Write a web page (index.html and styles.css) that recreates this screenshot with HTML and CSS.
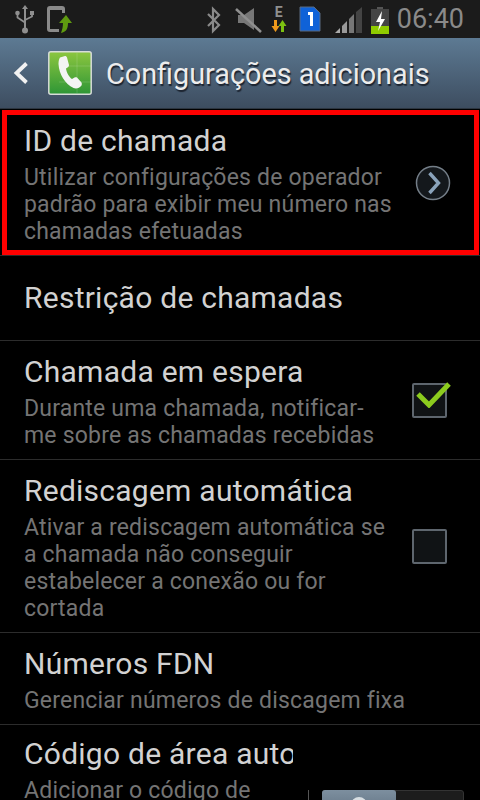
FILE: index.html
```html
<!DOCTYPE html>
<html lang="pt">
<head>
<meta charset="utf-8">
<title>Configurações adicionais</title>
<link rel="stylesheet" href="styles.css">
</head>
<body>
<div class="screen">
  <header class="status">
    <div class="status-left">
      <svg class="ic-usb" width="20" height="30" viewBox="0 0 20 30"><g fill="#8f8f8f"><path d="M9 3h2v21H9z"/><path d="M10 0l3 4H7z"/><circle cx="10" cy="25.5" r="3"/><rect x="15" y="6" width="4" height="4"/><circle cx="2.5" cy="8" r="2.3"/></g><path d="M2.5 9v3.5L10 17.500M17 9v2.500L10 15" fill="none" stroke="#8f8f8f" stroke-width="1.800"/></svg>
      <svg class="ic-phone" width="28" height="30" viewBox="0 0 28 30"><path d="M4 1h12a3 3 0 0 1 3 3v4h-3V5H4v19h9v3H4a3 3 0 0 1-3-3V4a3 3 0 0 1 3-3z" fill="#8a8a8a"/><path d="M15 28c5-1 7-4 7-10h4l-6-8-7 8h4c0 4-1 7-2 10z" fill="#5f9a10"/></svg>
    </div>
    <div class="status-right">
      <svg class="ic-bt" width="15" height="28" viewBox="0 0 15 28"><path d="M2 8l11 11-6 6V3l6 6L2 20" fill="none" stroke="#8a8a8a" stroke-width="2.200"/></svg>
      <svg class="ic-mute" width="28" height="28" viewBox="0 0 28 28"><path d="M3 10h6l10-7v22l-10-7H3z" fill="#777"/><path d="M1 4l25 23" stroke="#8f8f8f" stroke-width="2.500"/></svg>
      <div class="net">
        <span class="net-e">E</span>
        <svg width="16" height="13" viewBox="0 0 16 13"><path d="M3 0h3v6h2.500L4.500 12 .5 6H3z" fill="#ef9a1c"/><path d="M10 12V6H7.500l4-6 4 6H13v6z" fill="#7cc011"/></svg>
      </div>
      <svg class="ic-sim" width="22" height="26" viewBox="0 0 22 26"><path d="M1 1h14l6 6v18H1z" fill="#0f62d8" stroke="#5a6a80"/><path d="M9 6h5v14h-3V9H9z" fill="#fff"/></svg>
      <svg class="ic-signal" width="29" height="28" viewBox="0 0 29 28"><path d="M0 27l5-5v5z" fill="#aaa"/><path d="M7 20l5-5v12H7z" fill="#999"/><path d="M14 13l5-5v19h-5z" fill="#777"/><path d="M21 6l6-5v26h-6z" fill="#444"/></svg>
      <svg class="ic-batt" width="18" height="28" viewBox="0 0 18 28"><path d="M6 0h6v2H6z" fill="#555"/><path d="M0 2h18v17H0z" fill="#444"/><path d="M0 19h18v8H0z" fill="#8fcb00"/><path d="M11 4L5 15h4l-2 9 7-12H10z" fill="#fff"/></svg>
      <span class="clock">06:40</span>
    </div>
  </header>
  <div class="actionbar">
    <svg class="back" width="16" height="24" viewBox="0 0 16 24"><path d="M13.500 2.500L3.500 12l10 9.500" fill="none" stroke="#f2f2f2" stroke-width="3.800"/></svg>
    <svg class="appicon" width="44" height="44" viewBox="0 0 44 44">
      <defs><linearGradient id="g" x1="0" y1="0" x2="0" y2="1"><stop offset="0" stop-color="#8cc63f"/><stop offset="1" stop-color="#2e9636"/></linearGradient></defs>
      <rect x=".8" y=".8" width="42.400" height="42.400" rx="2" fill="url(#g)" stroke="#d8dcd8" stroke-width="1.500"/>
      <path d="M11 15h32M11 31h32M29 2v40" stroke="#fff" stroke-opacity=".14"/>
      <path d="M12 6.500l5-1.500c1 0 1.500.5 2 1.500l2 7.500c0 1-.5 2-1.500 2.500l-1.500 1c.5 4 3 8.500 6 10.500l2.500-1.500c1-.5 2-.5 2.500 0l4.500 5c.5 1 .5 2 0 3-2 2.500-5 3.500-8 2.500C17 33 11 23 10.500 13c0-3 .5-5 1.500-6.500z" fill="#f4f4f4"/>
    </svg>
    <h1 class="bar-title">Configurações adicionais</h1>
  </div>
  <main class="list">
    <section class="row row-boxed">
      <div class="text">
        <h2>ID de chamada</h2>
        <p>Utilizar configurações de operador padrão para exibir meu número nas chamadas efetuadas</p>
      </div>
      <svg class="chev" width="36" height="36" viewBox="0 0 36 36"><circle cx="18" cy="18" r="16.500" fill="#14181c" stroke="#747e88" stroke-width="1.500"/><path d="M14.500 8l9 10-9 10" fill="none" stroke="#8aa3bb" stroke-width="3.400"/></svg>
    </section>
    <section class="row row-single"><div class="text"><h2>Restrição de chamadas</h2></div></section>
    <section class="row row-wait">
      <div class="text">
        <h2>Chamada em espera</h2>
        <p>Durante uma chamada, notificar-<br>me sobre as chamadas recebidas</p>
      </div>
      <div class="check">
        <svg class="tick" width="36" height="30" viewBox="0 0 36 30"><path d="M3 16l11 11L34 6" fill="none" stroke="#8ccb1e" stroke-width="5"/></svg>
      </div>
    </section>
    <section class="row row-redial">
      <div class="text">
        <h2>Rediscagem automática</h2>
        <p>Ativar a rediscagem automática se a chamada não conseguir estabelecer a conexão ou for cortada</p>
      </div>
      <div class="check"></div>
    </section>
    <section class="row row-fdn">
      <div class="text">
        <h2>Números FDN</h2>
        <p class="nowrap">Gerenciar números de discagem fixa</p>
      </div>
    </section>
    <section class="row row-last">
      <div class="text">
        <h2 class="clip">Código de área auto</h2>
        <p class="nowrap">Adicionar o código de</p>
      </div>
      <div class="toggle-wrap">
        <div class="toggle"><div class="toggle-on"><span class="knob"></span></div></div>
      </div>
    </section>
  </main>
</div>
</body>
</html>
```
FILE: styles.css
```css
* { box-sizing: border-box; margin: 0; padding: 0; }
html, body { width: 480px; height: 800px; overflow: hidden; background: #000; }
body { font-family: Roboto, "Liberation Sans", sans-serif; }
.screen { width: 480px; height: 800px; overflow: hidden; display: flex; flex-direction: column; }

.status { height: 38px; flex: none; background: #1b1b1b; display: flex; justify-content: space-between; align-items: center; }
.status-left { display: flex; align-items: center; gap: 11px; padding-left: 15px; }
.ic-usb { margin-top: 2px; }
.ic-phone { margin-top: 2px; }
.status-right { display: flex; align-items: center; }
.ic-bt { margin-right: 14px; margin-top: 2px; }
.ic-mute { margin-right: 7px; }
.net { width: 18px; display: flex; flex-direction: column; align-items: center; margin-right: 11px; }
.net-e { font-size: 14px; line-height: 13px; font-weight: 700; color: #8f8f8f; margin-bottom: 1px; }
.ic-sim { margin-right: 14px; }
.ic-signal { margin-right: 7px; margin-top: 2px; }
.ic-batt { margin-right: 8px; margin-top: 4px; }
.clock { font-size: 27px; color: #8a8a8a; line-height: 38px; padding-right: 16px; }

.actionbar { height: 71px; flex: none; display: flex; align-items: center; background: linear-gradient(#5d7a93, #3d4d60); border-bottom: 1px solid #2c3540; padding-left: 13px; }
.back { margin-right: 19px; }
.appicon { margin-right: 14px; }
.bar-title { font-size: 28.8px; font-weight: 400; color: #ececec; text-shadow: 1px 2px 1px #1c2430; white-space: nowrap; padding-top: 2px; }

.list { flex: 1; }
.row { display: flex; align-items: center; border-bottom: 1px solid #2c2c2c; padding: 0 24px; }
.text { flex: 1; min-width: 0; padding-top: 4px; }
h2 { font-size: 30px; font-weight: 400; line-height: 36px; letter-spacing: .25px; color: #d2d2d2; white-space: nowrap; margin: -1px 0 5px; }
p { font-size: 23px; line-height: 27px; letter-spacing: .2px; color: #747474; width: 372px; }
.nowrap { white-space: nowrap; }

.row-boxed { height: 145px; border: 5px solid #f00; margin: 1px 1px 0 2px; padding: 0 23px 0 17px; width: 477px; }
.row-single { height: 86px; border-top: 1px solid #2c2c2c; }
.row-single .text { padding-top: 6px; }
.chev { flex: none; }
.row-wait { height: 119px; }
.row-redial { height: 173px; }
.row-fdn { height: 92px; }
.row-last { height: 76px; border: 0; align-items: flex-start; padding-top: 8px; }

.check { flex: none; width: 35px; height: 35px; margin-right: 9px; border: 2px solid #5e666e; border-radius: 2px; background: #101315; position: relative; }
.tick { position: absolute; left: 1px; top: -7px; }

.clip { width: 269px; overflow: hidden; }
.row-last .text { flex: none; width: 284px; }
.toggle-wrap { flex: none; width: 156px; margin-top: 57px; border-left: 1px solid #555; padding-left: 13px; height: 20px; }
.toggle { width: 142px; height: 30px; background: #1c1c1c; border-radius: 3px; border: 1px solid #333; }
.toggle-on { width: 74px; height: 30px; background: linear-gradient(#7d8f9f, #5a6b7b); border-radius: 3px; display: flex; justify-content: center; margin: -1px; }
.knob { width: 16px; height: 16px; border-radius: 50%; background: #d8dee2; margin-top: 7px; }
```
